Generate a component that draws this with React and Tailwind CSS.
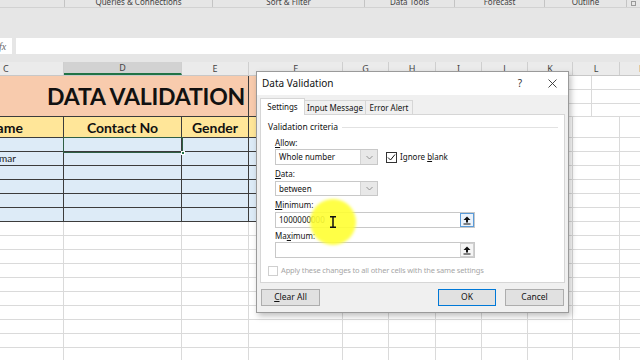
import React from "react";

const cols = [
  { k: "C", w: "w-[64px]" },
  { k: "D", w: "w-[118px]" },
  { k: "E", w: "w-[67px]" },
  { k: "F", w: "w-[94px]" },
  { k: "G", w: "w-[46px]" },
  { k: "H", w: "w-[47px]" },
  { k: "I", w: "w-[46px]" },
  { k: "J", w: "w-[46px]" },
  { k: "K", w: "w-[45px]" },
  { k: "L", w: "w-[47px]" },
  { k: "M", w: "w-[47px]" },
];

const ribbonGroups = [
  { w: "w-[65px]", label: "" },
  { w: "w-[148px]", label: "Queries & Connections" },
  { w: "w-[152px]", label: "Sort & Filter" },
  { w: "w-[90px]", label: "Data Tools" },
  { w: "w-[90px]", label: "Forecast" },
  { w: "w-[82px]", label: "Outline" },
];

const dataRows = [0, 1, 2, 3, 4, 5];
const emptyRows = [0, 1, 2, 3, 4, 5, 6, 7, 8, 9];

const RefIcon = () => (
  <svg width="8" height="9" viewBox="0 0 8 9">
    <path d="M4 0.5 L7.5 4 L5 4 L5 6.5 L3 6.5 L3 4 L0.5 4 Z" fill="#111" />
    <rect x="0.5" y="7.5" width="7" height="1" fill="#111" />
  </svg>
);

const Chevron = () => (
  <svg width="7" height="5" viewBox="0 0 7 5">
    <path d="M0.5 1 L3.5 4 L6.5 1" fill="none" stroke="#8a8a8a" strokeWidth="0.9" />
  </svg>
);

const Select = ({ value, h }) => (
  <div className={`w-[103px] ${h} bg-white border border-[#c8c8c8] flex items-stretch`}>
    <span className="flex-1 pl-[3px] flex items-center text-[8px] text-[#111]">{value}</span>
    <span className="w-[17px] bg-[#e8e8e8] border-l border-[#d4d4d4] flex items-center justify-center">
      <Chevron />
    </span>
  </div>
);

const RangeInput = ({ value, active }) => (
  <div className="w-[200px] h-[16px] bg-white border border-[#c8c8c8] flex items-stretch">
    <span className="flex-1 pl-[3px] flex items-center text-[8px] text-[#111]">{value}</span>
    <span
      className={`w-[14px] flex items-center justify-center border ${
        active ? "border-[#5a9bd8] bg-[#eaf2fb]" : "border-[#d0d0d0] bg-[#f5f5f5]"
      }`}
    >
      <RefIcon />
    </span>
  </div>
);

const Label = ({ pre, u, post }) => (
  <div className="h-[10px] leading-[10px] text-[8px] text-[#111]">
    {pre}
    <span className="underline">{u}</span>
    {post}
  </div>
);

const SheetRow = ({ h, kind, idx }) => (
  <div className={`flex ${h}`}>
    {cols.map((c, i) => {
      const inTable = i < 4 && (kind === "head" || kind === "data");
      let cls = `${c.w} h-full shrink-0 border-r border-b overflow-hidden relative flex items-center `;
      if (kind === "head" && i < 4) cls += "bg-[#ffe699] border-[#3c3c3c] justify-center ";
      else if (inTable) cls += "bg-[#ddebf7] border-[#3c3c3c] ";
      else cls += "bg-white border-[#dadada] ";
      let content = null;
      if (kind === "head") {
        const t = ["Name", "Contact No", "Gender", ""][i];
        if (i === 0)
          content = <span className="-ml-[14px] mr-auto font-bold text-[14px] text-[#111]">Name</span>;
        else if (t) content = <span className="font-bold text-[14px] text-[#111]">{t}</span>;
      }
      if (kind === "data" && idx === 1 && i === 0)
        content = <span className="-ml-[13px] text-[10px] text-[#222]">Kumar</span>;
      return (
        <div key={c.k} className={cls}>
          {content}
        </div>
      );
    })}
  </div>
);

export default function App() {
  return (
    <div className="w-[640px] h-[360px] relative overflow-hidden bg-white font-['Lato','Noto_Sans',sans-serif]">
      {/* ribbon */}
      <div className="h-[38px] bg-[#e6e6e6]">
        <div className="h-[8px] flex border-b border-[#d2d2d2] overflow-hidden font-['Noto_Sans',sans-serif]">
          {ribbonGroups.map((g, i) => (
            <div
              key={i}
              className={`${g.w} shrink-0 h-full border-r border-[#c4c4c4] flex justify-center`}
            >
              <span className="-mt-[3px] text-[8px] leading-[10px] text-[#444] whitespace-nowrap">{g.label}</span>
            </div>
          ))}
          <div className="flex-1 flex justify-center">
            <span className="mt-[1px] w-[5px] h-[5px] border border-[#999]" />
          </div>
        </div>
      </div>
      {/* formula bar */}
      <div className="h-[24px] bg-[#e6e6e6]">
        <div className="h-[16px] flex gap-[4px]">
          <div className="w-[12px] bg-white overflow-hidden flex items-center">
            <span className="-ml-[1px] italic text-[10px] text-[#666] font-['Liberation_Serif',serif]">fx</span>
          </div>
          <div className="flex-1 bg-white" />
        </div>
      </div>
      {/* column headers */}
      <div className="flex h-[14px] bg-[#ebebeb] border-b border-[#c8c8c8] font-['Noto_Sans',sans-serif]">
        {cols.map((c, i) => (
          <div
            key={c.k}
            className={`${c.w} shrink-0 h-full border-r border-[#cfcfcf] flex items-center text-[9px] leading-none ${
              i === 0 ? "justify-start pl-[3px] text-[#444]" : "justify-center text-[#444]"
            } ${i === 1 ? "bg-[#d2d2d2] border-b-2 border-b-[#217346]" : ""}`}
          >
            {c.k}
          </div>
        ))}
      </div>
      {/* sheet */}
      <div className="flex">
        <div className="w-[249px] h-[41px] shrink-0 bg-[#f8cbad] border-r border-b border-[#3c3c3c] flex items-center">
          <span className="pl-[47px] pt-[1px] font-bold text-[23px] tracking-[-0.2px] text-[#111] whitespace-nowrap">
            DATA VALIDATION
          </span>
        </div>
        <div className="w-[94px] h-[41px] shrink-0 bg-[#f8cbad] border-r border-b border-[#3c3c3c]" />
        <div className="flex flex-col">
          <SheetRow h="h-[14px]" kind="empty" />
          <SheetRow h="h-[14px]" kind="empty" />
          <SheetRow h="h-[13px]" kind="empty" />
        </div>
      </div>
      <div className="relative">
        <SheetRow h="h-[21px]" kind="head" />
        {dataRows.map((r) => (
          <SheetRow key={r} h="h-[14px]" kind="data" idx={r} />
        ))}
        {emptyRows.map((r) => (
          <SheetRow key={r} h="h-[14px]" kind="empty" />
        ))}
        {/* active cell D */}
        <div className="absolute left-[63px] top-[20px] w-[120px] h-[16px] border-[1.5px] border-[#2f5f45]">
          <span className="absolute -right-[3px] -bottom-[3px] w-[4px] h-[4px] bg-[#217346] border border-white" />
        </div>
      </div>

      {/* dialog */}
      <div className="absolute left-[256px] top-[71px] w-[313px] h-[242px] bg-[#f0f0f0] border border-[#9a9a9a] shadow-[2px_3px_6px_rgba(0,0,0,0.25)] font-['Noto_Sans',sans-serif] text-[#111]">
        <div className="h-[23px] bg-white flex items-center justify-between pl-[5px] pr-[11px]">
          <span className="text-[10px]">Data Validation</span>
          <div className="flex items-center gap-[26px] text-[#333]">
            <span className="text-[10px]">?</span>
            <svg width="9" height="9" viewBox="0 0 9 9">
              <path d="M0.5 0.5 L8.5 8.5 M8.5 0.5 L0.5 8.5" stroke="#333" strokeWidth="0.9" />
            </svg>
          </div>
        </div>
        <div className="pt-[3px] px-[3px] flex items-end h-[20px] text-[8px] whitespace-nowrap">
          <div className="relative z-10 w-[45px] h-[17px] bg-white border border-b-0 border-[#d6d6d6] flex items-center justify-center">
            Settings
          </div>
          <div className="w-[61px] h-[15px] border-t border-r border-[#d6d6d6] flex items-center justify-center">
            Input Message
          </div>
          <div className="w-[47px] h-[15px] border-t border-r border-[#d6d6d6] flex items-center justify-center">
            Error Alert
          </div>
        </div>
        <div className="mx-[3px] -mt-px h-[169px] bg-white border border-[#d6d6d6]">
          <div className="mt-[7px] pl-[7px] pr-[6px] flex items-center gap-[4px]">
            <span className="h-[10px] leading-[10px] text-[8.5px]">Validation criteria</span>
            <span className="flex-1 h-px bg-[#e2e2e2]" />
          </div>
          <div className="pl-[14px]">
            <div className="mt-[6px]">
              <Label u="A" post="llow:" />
            </div>
            <div className="mt-[1px] flex items-center">
              <Select value="Whole number" h="h-[16px]" />
              <span className="ml-[8px] w-[11px] h-[11px] border border-[#333] bg-white flex items-center justify-center">
                <svg width="9" height="9" viewBox="0 0 9 9">
                  <path d="M1 4.5 L3.5 7 L8 1.5" fill="none" stroke="#111" strokeWidth="1" />
                </svg>
              </span>
              <span className="ml-[3px] text-[8px]">
                Ignore <span className="underline">b</span>lank
              </span>
            </div>
            <div className="mt-[4px]">
              <Label u="D" post="ata:" />
            </div>
            <div className="mt-[2px]">
              <Select value="between" h="h-[15px]" />
            </div>
            <div className="mt-[4px]">
              <Label u="M" post="inimum:" />
            </div>
            <div className="mt-[2px]">
              <RangeInput value="1000000000" active />
            </div>
            <div className="mt-[3px]">
              <Label pre="Ma" u="x" post="imum:" />
            </div>
            <div className="mt-[1px]">
              <RangeInput value="" />
            </div>
          </div>
          <div className="mt-[7px] pl-[7px] flex items-center">
            <span className="w-[10px] h-[10px] border border-[#cfcfcf] bg-white" />
            <span className="ml-[3px] text-[7.5px] tracking-[-0.15px] text-[#a6a6a6] whitespace-nowrap">
              Apply these changes to all other cells with the same settings
            </span>
          </div>
        </div>
        <div className="mt-[6px] px-[4px] flex items-center text-[8.5px]">
          <div className="w-[59px] h-[17px] bg-[#e1e1e1] border border-[#adadad] flex items-center justify-center">
            <span>
              <span className="underline">C</span>lear All
            </span>
          </div>
          <div className="ml-auto w-[58px] h-[17px] bg-[#e1e1e1] border border-[#0078d7] flex items-center justify-center">
            OK
          </div>
          <div className="ml-[9px] w-[59px] h-[17px] bg-[#e1e1e1] border border-[#adadad] flex items-center justify-center">
            Cancel
          </div>
        </div>
      </div>

      {/* yellow cursor highlight */}
      <div className="absolute left-[310px] top-[199px] w-[46px] h-[46px] rounded-full bg-[#ffff33] opacity-90 blur-[1.5px]" />
      <svg className="absolute left-[329px] top-[216px]" width="8" height="12" viewBox="0 0 8 12">
        <path d="M1 0.75 H7 M4 0.75 V11.25 M1 11.25 H7" stroke="#111" strokeWidth="1.5" fill="none" />
      </svg>
    </div>
  );
}
